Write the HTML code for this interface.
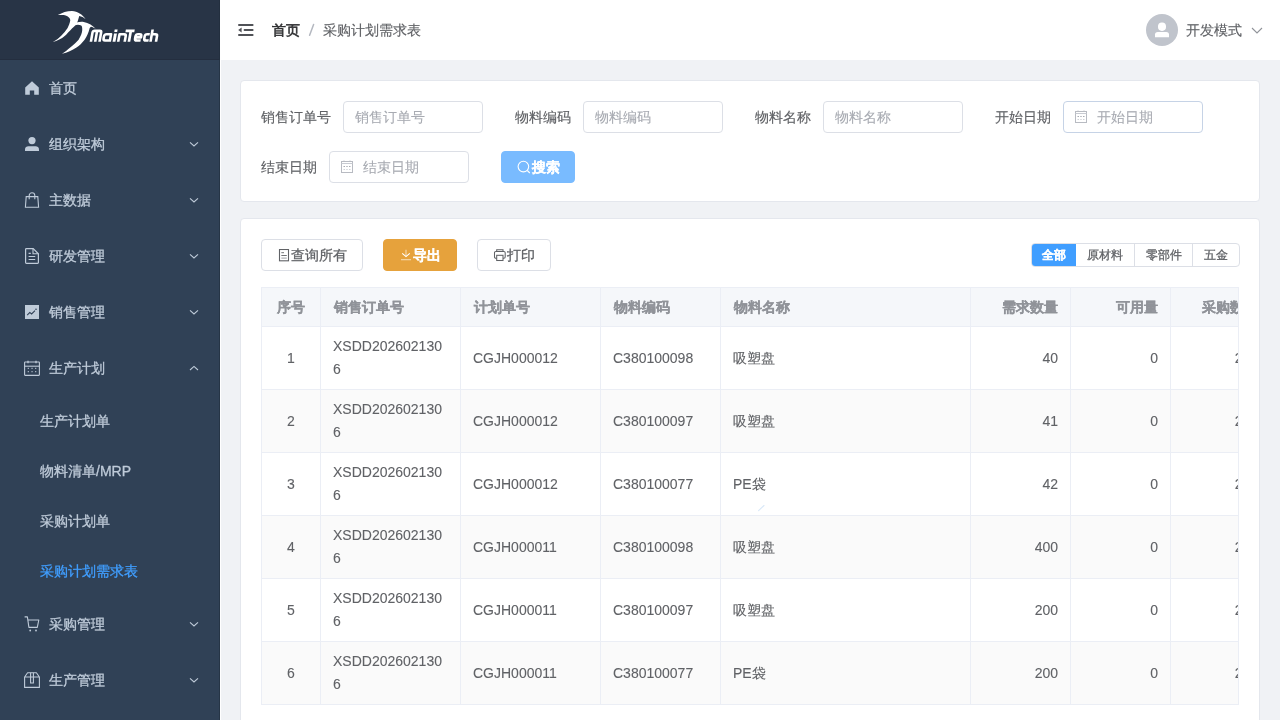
<!DOCTYPE html>
<html><head><meta charset="utf-8"><style>
*{box-sizing:border-box;margin:0;padding:0}
body{will-change:transform}
body *{-webkit-text-stroke:0.3px currentColor}
.th,[style*="font-weight:bold"]{-webkit-text-stroke:0.2px currentColor}
.td,.td *{-webkit-text-stroke:0.1px currentColor}
.lbl{-webkit-text-stroke:0.15px currentColor}
.inp{-webkit-text-stroke:0.1px currentColor}
#hdr span{-webkit-text-stroke:0.15px currentColor}
html,body{width:1280px;height:720px;overflow:hidden;font-family:"Liberation Sans",sans-serif;font-size:14px;background:#f0f2f5;color:#606266}
#side{position:absolute;left:0;top:0;width:220px;height:720px;background:#304156;z-index:5}
#logo{position:absolute;left:0;top:0;width:220px;height:60px;background:#283446}
.mi{position:absolute;left:0;width:220px;height:56px;color:#bfcbd9;font-size:14px}
.mi .t{position:absolute;left:49px;top:0;line-height:56px}
.mi svg.ic{position:absolute;left:24px;top:20px;width:16px;height:16px}
.mi svg.ar{position:absolute;left:188px;top:24px;width:12px;height:8px}
.si{position:absolute;left:0;width:220px;height:50px;line-height:50px;color:#bfcbd9}
.si .t{position:absolute;left:40px;top:0}
#hdr{position:absolute;left:220px;top:0;width:1060px;height:60px;background:#fff}
.card{position:absolute;background:#fff;border:1px solid #e4e7ed;border-radius:4px}
.lbl{position:absolute;color:#606266;line-height:32px;font-weight:500}
.inp{position:absolute;height:32px;border:1px solid #dcdfe6;border-radius:4px;background:#fff;color:#a8abb2;line-height:30px;padding-left:11px}
.btn{position:absolute;height:32px;border:1px solid #dcdfe6;border-radius:4px;background:#fff;color:#606266;line-height:30px;text-align:center}
.th{position:absolute;top:0;height:40px;line-height:40px;padding:0 12px 0 14px;color:#909399;font-weight:bold;white-space:nowrap;overflow:hidden}
.td{position:absolute;height:63px;padding:8px 12px 8px 13px;line-height:23px;color:#606266;display:flex;align-items:center;white-space:nowrap}
.td.c{justify-content:center}
</style></head><body>
<div id="side"><div id="logo"><svg style="position:absolute;left:0;top:0" width="220" height="60" viewBox="0 0 220 60">
<path d="M57.9,15.1 C62,12.6 67,11 72,11 C77.5,11.2 82.5,14.5 85.6,19.3 C83.6,17.6 81.5,16.4 79.2,16.1 C78.6,18.5 78,20.5 77.4,21.9 L76,24.4 C74,26.6 73,27.5 72.2,28.2 C69.3,31.2 67.2,33.6 65,35.8 C61.2,39 57.5,40.8 52.7,42 C56.5,40 59.2,38 61.2,35.8 C63.6,33.2 65.9,30.6 67.6,28 C68.6,25.6 69.8,23.5 70.25,20.5 C70.3,17.6 67.5,15.6 63.5,15 C61.5,14.8 59.5,14.9 57.9,15.1 Z" fill="#fff"/>
<path d="M76.2,22.6 C79,21.8 81.5,21.6 83.7,21.9 C88.5,22.6 93,25.5 96.1,29.2 C94.5,28 92.7,27.1 90.9,26.75 C90.3,27.3 90,27.6 89.7,28 C88.5,33 86.8,36.5 84.6,39.7 C82,43 79.5,45.5 76.5,47.5 C72,50.5 67.5,52.5 62,53.7 C65.2,52 67.8,49.6 70.2,47.5 C73.6,44.5 76.6,42 78.6,39.7 C80.8,36 82,33 82.2,30.5 C82.4,28.5 82.2,26.5 81.2,25.6 C79.5,24.6 76.5,24.6 74.4,25.6 Z" fill="#fff"/>
<g transform="translate(0,41.8) skewX(-10) translate(0,-41.8)" fill="none" stroke="#fff" stroke-width="2.6" stroke-linejoin="round">
<path d="M90.9,41.8 V32.6 Q90.9,30.9 92.6,30.9 H97.8 Q99.5,30.9 99.5,32.6 V41.8 M95.2,31.5 V41.8"/>
<path d="M109.7,41.8 V34.2 H105 Q103,34.2 103,36.4 V38.3 Q103,40.5 105,40.5 H109.7"/>
<path d="M114,41.8 V33.4 M114,29.6 V31.9" stroke-width="2.9"/>
<path d="M118.2,41.8 V34.2 H122.7 Q124.7,34.2 124.7,36.2 V41.8"/>
<path d="M123.7,30.9 H132.6 M128.9,30.9 V41.8" stroke-width="2.7"/>
<path d="M140.4,40.5 H136.6 Q134.5,40.5 134.5,38.4 V36.3 Q134.5,34.2 136.6,34.2 H138.3 Q140.2,34.2 140.2,36.1 V37.4 H135"/>
<path d="M148.4,34.2 H145.8 Q143.7,34.2 143.7,36.3 V38.4 Q143.7,40.5 145.8,40.5 H148.4"/>
<path d="M150.5,41.8 V29.6 M150.5,34.2 H154 Q156,34.2 156,36.2 V41.8"/>
</g>
</svg></div>
<div style="position:absolute;left:219px;top:0;width:1px;height:720px;background:#1f2b3a;opacity:.55;z-index:3"></div>
<div class="mi" style="top:60px"><svg class="ic" viewBox="0 0 16 16"><path d="M8 1.2 L14.8 7.6 V14.8 H10.2 V10.4 H5.8 V14.8 H1.2 V7.6 Z" fill="currentColor"/></svg><span class="t">首页</span></div>
<div class="mi" style="top:116px"><svg class="ic" viewBox="0 0 16 16"><circle cx="8" cy="4.6" r="3.6" fill="currentColor"/><path d="M1 15 V13.4 C1 11.4 2.6 10.2 4.4 10.2 H11.6 C13.4 10.2 15 11.4 15 13.4 V15 Z" fill="currentColor"/></svg><span class="t">组织架构</span><svg class="ar" viewBox="0 0 12 8"><path d="M2 2.4 L6 6 L10 2.4" fill="none" stroke="currentColor" stroke-width="1.1"/></svg></div>
<div class="mi" style="top:172px"><svg class="ic" viewBox="0 0 16 16"><path d="M1.4 15.3 L2.2 4.6 H13.8 L14.6 15.3 Z" fill="none" stroke="currentColor" stroke-width="1.1"/><path d="M5.2 7.2 V3.6 A2.8 2.8 0 0 1 10.8 3.6 V7.2" fill="none" stroke="currentColor" stroke-width="1.1"/></svg><span class="t">主数据</span><svg class="ar" viewBox="0 0 12 8"><path d="M2 2.4 L6 6 L10 2.4" fill="none" stroke="currentColor" stroke-width="1.1"/></svg></div>
<div class="mi" style="top:228px"><svg class="ic" viewBox="0 0 16 16"><path d="M1.6 1.4 Q1.6 0.6 2.4 0.6 H9.2 L14.4 5.8 V14.6 Q14.4 15.4 13.6 15.4 H2.4 Q1.6 15.4 1.6 14.6 Z" fill="none" stroke="currentColor" stroke-width="1.2"/><path d="M9 0.8 V5.8 H14.2" fill="none" stroke="currentColor" stroke-width="1.1"/><path d="M4.6 5.4 H6.8 M4.6 8.5 H11.2 M4.6 11.5 H11.2" stroke="currentColor" stroke-width="1.1"/></svg><span class="t">研发管理</span><svg class="ar" viewBox="0 0 12 8"><path d="M2 2.4 L6 6 L10 2.4" fill="none" stroke="currentColor" stroke-width="1.1"/></svg></div>
<div class="mi" style="top:284px"><svg class="ic" viewBox="0 0 16 16"><rect x="1" y="1" width="14" height="14" fill="currentColor"/><path d="M3.2 11.2 L5.8 8.4 L7.6 10 L11 6.6" fill="none" stroke="#304156" stroke-width="1.1"/><circle cx="12" cy="5.2" r="0.8" fill="#304156"/></svg><span class="t">销售管理</span><svg class="ar" viewBox="0 0 12 8"><path d="M2 2.4 L6 6 L10 2.4" fill="none" stroke="currentColor" stroke-width="1.1"/></svg></div>
<div class="mi" style="top:340px"><svg class="ic" viewBox="0 0 16 16"><rect x="0.6" y="2" width="14.8" height="13.4" rx="0.6" fill="none" stroke="currentColor" stroke-width="1.1"/><path d="M0.6 6.2 H15.4" stroke="currentColor" stroke-width="1.1"/><path d="M4 0.8 V3.2 M12 0.8 V3.2" stroke="currentColor" stroke-width="1.3"/><path d="M3.7 8.4 H5 M7.4 8.4 H8.7 M11 8.4 H12.3 M3.7 11.6 H5 M7.4 11.6 H8.7 M11 11.6 H12.3" stroke="currentColor" stroke-width="1.1" opacity=".8"/></svg><span class="t">生产计划</span><svg class="ar" viewBox="0 0 12 8"><path d="M2 6 L6 2.4 L10 6" fill="none" stroke="currentColor" stroke-width="1.1"/></svg></div>
<div class="si" style="top:396px"><span class="t">生产计划单</span></div>
<div class="si" style="top:446px"><span class="t">物料清单/MRP</span></div>
<div class="si" style="top:496px"><span class="t">采购计划单</span></div>
<div class="si" style="top:546px"><span class="t" style="color:#409eff">采购计划需求表</span></div>
<div class="mi" style="top:596px"><svg class="ic" viewBox="0 0 16 16"><path d="M0.6 0.9 H3.4 L4.9 11.4 H13.3 L14.8 4 H3.8" fill="none" stroke="currentColor" stroke-width="1.1" stroke-linejoin="round"/><circle cx="6.2" cy="14.5" r="0.9" fill="currentColor"/><circle cx="12" cy="14.5" r="0.9" fill="currentColor"/></svg><span class="t">采购管理</span><svg class="ar" viewBox="0 0 12 8"><path d="M2 2.4 L6 6 L10 2.4" fill="none" stroke="currentColor" stroke-width="1.1"/></svg></div>
<div class="mi" style="top:652px"><svg class="ic" viewBox="0 0 16 16"><path d="M0.6 5 L3.6 0.8 H12.4 L15.4 5 V15.4 H0.6 Z M0.6 5 H15.4" fill="none" stroke="currentColor" stroke-width="1.1" stroke-linejoin="round"/><path d="M6.6 0.8 V11 H9.4 V0.8" fill="none" stroke="currentColor" stroke-width="1.1"/></svg><span class="t">生产管理</span><svg class="ar" viewBox="0 0 12 8"><path d="M2 2.4 L6 6 L10 2.4" fill="none" stroke="currentColor" stroke-width="1.1"/></svg></div>
</div>
<div id="hdr">
<svg style="position:absolute;left:17px;top:22px" width="18" height="16" viewBox="0 0 18 16"><path d="M2 3 H15.6 M7.6 8 H15.6 M2 13 H15.6" stroke="#505257" stroke-width="2" stroke-linecap="round"/><path d="M1.2 8 L4.6 5.6 V10.4 Z" fill="#505257"/></svg>
<span style="position:absolute;left:52px;top:0;line-height:60px;color:#303133;-webkit-text-stroke:0.55px #303133">首页</span>
<svg style="position:absolute;left:88px;top:23px" width="8" height="14" viewBox="0 0 8 14"><path d="M1.6 12.3 L5.6 1.4" stroke="#b4b8c0" stroke-width="1.5" stroke-linecap="round"/></svg>
<span style="position:absolute;left:103px;top:0;line-height:60px;color:#606266">采购计划需求表</span>
<div style="position:absolute;left:926px;top:14px;width:32px;height:32px;border-radius:50%;background:#c0c4cc;overflow:hidden">
<svg width="32" height="32" viewBox="0 0 32 32"><rect x="12" y="8.5" width="8" height="8.4" rx="3.8" fill="#fff"/><path d="M9 23.2 V20.6 Q9 17.9 11.8 17.9 H20.2 Q23 17.9 23 20.6 V23.2 Z" fill="#fff"/></svg></div>
<span style="position:absolute;left:966px;top:0;line-height:60px;color:#606266">开发模式</span>
<svg style="position:absolute;left:1031px;top:26px" width="12" height="10" viewBox="0 0 12 10"><path d="M1 2 L6 7 L11 2" fill="none" stroke="#909399" stroke-width="1.1"/></svg>
</div>
<div style="position:absolute;left:0;top:59px;width:219px;height:1px;background:#222c3b;opacity:.6;z-index:6"></div>
<div style="position:absolute;left:220px;top:60px;width:1px;height:660px;background:#fff"></div>
<div class="card" style="left:240px;top:80px;width:1020px;height:122px"></div>
<span class="lbl" style="left:261px;top:101px">销售订单号</span>
<div class="inp" style="left:343px;top:101px;width:140px">销售订单号</div>
<span class="lbl" style="left:515px;top:101px">物料编码</span>
<div class="inp" style="left:583px;top:101px;width:140px">物料编码</div>
<span class="lbl" style="left:755px;top:101px">物料名称</span>
<div class="inp" style="left:823px;top:101px;width:140px">物料名称</div>
<span class="lbl" style="left:995px;top:101px">开始日期</span>
<div class="inp" style="left:1063px;top:101px;width:140px;padding-left:33px;border-color:#c6d3e6"><svg style="position:absolute;left:11px;top:8px" width="13" height="14" viewBox="0 0 13 14"><rect x="0.5" y="1.5" width="11" height="11" fill="none" stroke="#b8bbc2" stroke-width="1"/><path d="M0.5 3.5 H11.5" stroke="#c8cbd2" stroke-width="1"/><path d="M3 0.5 V2 M9 0.5 V2" stroke="#b8bbc2" stroke-width="1"/><path d="M2.5 6.5 H4 M5.3 6.5 H6.7 M8 6.5 H9.5" stroke="#a8abb2" stroke-width="1"/><path d="M2.5 9.5 H4 M5.3 9.5 H6.7 M8 9.5 H9.5" stroke="#d0d3d8" stroke-width="1"/></svg>开始日期</div>
<span class="lbl" style="left:261px;top:151px">结束日期</span>
<div class="inp" style="left:329px;top:151px;width:140px;padding-left:33px"><svg style="position:absolute;left:11px;top:8px" width="13" height="14" viewBox="0 0 13 14"><rect x="0.5" y="1.5" width="11" height="11" fill="none" stroke="#b8bbc2" stroke-width="1"/><path d="M0.5 3.5 H11.5" stroke="#c8cbd2" stroke-width="1"/><path d="M3 0.5 V2 M9 0.5 V2" stroke="#b8bbc2" stroke-width="1"/><path d="M2.5 6.5 H4 M5.3 6.5 H6.7 M8 6.5 H9.5" stroke="#a8abb2" stroke-width="1"/><path d="M2.5 9.5 H4 M5.3 9.5 H6.7 M8 9.5 H9.5" stroke="#d0d3d8" stroke-width="1"/></svg>结束日期</div>
<div class="btn" style="left:501px;top:151px;width:74px;background:#79bbff;border-color:#79bbff;color:#fff;font-weight:bold;padding-left:16px">
<svg style="position:absolute;left:15px;top:8px" width="14" height="14" viewBox="0 0 14 14"><circle cx="6.4" cy="6.6" r="5.3" fill="none" stroke="#fff" stroke-width="1.1"/><path d="M10.3 10.5 L12.8 13" stroke="#fff" stroke-width="1.1"/></svg>搜索</div>

<div class="card" style="left:240px;top:218px;width:1020px;height:540px"></div>
<div class="btn" style="left:261px;top:239px;width:102px;padding-left:14px">
<svg style="position:absolute;left:16px;top:9px" width="12" height="13" viewBox="0 0 12 13"><rect x="1.5" y="0.5" width="9" height="11.3" fill="none" stroke="#606266" stroke-width="1.1"/><path d="M3.3 3.7 H6 M3.3 6.5 H8.8" stroke="#606266" stroke-width="0.9"/><path d="M3.3 9.1 H8.8" stroke="#9a9ca2" stroke-width="1"/></svg>查询所有</div>
<div class="btn" style="left:383px;top:239px;width:74px;background:#e6a23c;border-color:#e6a23c;color:#fff;font-weight:bold;padding-left:14px">
<svg style="position:absolute;left:16px;top:9px" width="12" height="13" viewBox="0 0 12 13"><path d="M6 0.8 V7.2" stroke="#fff" stroke-opacity=".6" stroke-width="1.1"/><path d="M2.2 4.3 L6 7.6 L9.8 4.3" fill="none" stroke="#fff" stroke-width="1.1"/><path d="M1 10.7 H11" stroke="#fff" stroke-opacity=".6" stroke-width="1.1"/></svg>导出</div>
<div class="btn" style="left:477px;top:239px;width:74px;padding-left:14px">
<svg style="position:absolute;left:15px;top:9px" width="14" height="13" viewBox="0 0 14 13"><rect x="1.5" y="2.5" width="10.7" height="6.8" rx="1.3" fill="none" stroke="#606266" stroke-width="1.05"/><path d="M3.7 2.4 V0.8 H10 V2.4" fill="none" stroke="#606266" stroke-width="1.05"/><rect x="3.7" y="6.3" width="6.3" height="5.2" fill="#fff" stroke="#606266" stroke-width="1.05"/></svg>打印</div>
<div style="position:absolute;left:1031px;top:243px;width:209px;height:24px;border:1px solid #dcdfe6;border-radius:4px;font-size:12px;line-height:22px;color:#606266;background:#fff;overflow:hidden">
<span style="position:absolute;left:-1px;top:-1px;width:45px;height:24px;line-height:24px;background:#409eff;color:#fff;text-align:center;font-weight:bold;border-radius:4px 0 0 4px">全部</span>
<span style="position:absolute;left:44px;top:0;width:59px;text-align:center;border-right:1px solid #dcdfe6;font-weight:500">原材料</span>
<span style="position:absolute;left:103px;top:0;width:58px;text-align:center;border-right:1px solid #dcdfe6;font-weight:500">零部件</span>
<span style="position:absolute;left:161px;top:0;width:46px;text-align:center;font-weight:500">五金</span>
</div>

<div id="tw" style="position:absolute;left:261px;top:287px;width:978px;height:420px;overflow:hidden">
<div style="position:absolute;left:0;top:0;width:1009px;height:40px;background:#f5f7fa"></div>
<div class="th" style="left:0px;width:60px;text-align:center;padding:0 12px">序号</div>
<div class="th" style="left:59px;width:140px;text-align:left">销售订单号</div>
<div class="th" style="left:199px;width:140px;text-align:left">计划单号</div>
<div class="th" style="left:339px;width:120px;text-align:left">物料编码</div>
<div class="th" style="left:459px;width:250px;text-align:left">物料名称</div>
<div class="th" style="left:709px;width:100px;text-align:right">需求数量</div>
<div class="th" style="left:809px;width:100px;text-align:right">可用量</div>
<div class="th" style="left:909px;width:100px;text-align:right">采购数量</div>
<div style="position:absolute;left:0;top:40px;width:1009px;height:63px;background:#fff"></div>
<div class="td" style="left:0px;top:40px;width:60px;text-align:center;justify-content:center;padding:8px 12px">1</div>
<div class="td" style="left:59px;top:40px;width:140px;text-align:left;justify-content:flex-start"><span style="position:relative;top:-1px">XSDD202602130<br>6</span></div>
<div class="td" style="left:199px;top:40px;width:140px;text-align:left;justify-content:flex-start">CGJH000012</div>
<div class="td" style="left:339px;top:40px;width:120px;text-align:left;justify-content:flex-start">C380100098</div>
<div class="td" style="left:459px;top:40px;width:250px;text-align:left;justify-content:flex-start">吸塑盘</div>
<div class="td" style="left:709px;top:40px;width:100px;text-align:right;justify-content:flex-end">40</div>
<div class="td" style="left:809px;top:40px;width:100px;text-align:right;justify-content:flex-end">0</div>
<div class="td" style="left:909px;top:40px;width:100px;text-align:right;justify-content:flex-end">200</div>
<div style="position:absolute;left:0;top:103px;width:1009px;height:63px;background:#fafafa"></div>
<div class="td" style="left:0px;top:103px;width:60px;text-align:center;justify-content:center;padding:8px 12px">2</div>
<div class="td" style="left:59px;top:103px;width:140px;text-align:left;justify-content:flex-start"><span style="position:relative;top:-1px">XSDD202602130<br>6</span></div>
<div class="td" style="left:199px;top:103px;width:140px;text-align:left;justify-content:flex-start">CGJH000012</div>
<div class="td" style="left:339px;top:103px;width:120px;text-align:left;justify-content:flex-start">C380100097</div>
<div class="td" style="left:459px;top:103px;width:250px;text-align:left;justify-content:flex-start">吸塑盘</div>
<div class="td" style="left:709px;top:103px;width:100px;text-align:right;justify-content:flex-end">41</div>
<div class="td" style="left:809px;top:103px;width:100px;text-align:right;justify-content:flex-end">0</div>
<div class="td" style="left:909px;top:103px;width:100px;text-align:right;justify-content:flex-end">200</div>
<div style="position:absolute;left:0;top:166px;width:1009px;height:63px;background:#fff"></div>
<div class="td" style="left:0px;top:166px;width:60px;text-align:center;justify-content:center;padding:8px 12px">3</div>
<div class="td" style="left:59px;top:166px;width:140px;text-align:left;justify-content:flex-start"><span style="position:relative;top:-1px">XSDD202602130<br>6</span></div>
<div class="td" style="left:199px;top:166px;width:140px;text-align:left;justify-content:flex-start">CGJH000012</div>
<div class="td" style="left:339px;top:166px;width:120px;text-align:left;justify-content:flex-start">C380100077</div>
<div class="td" style="left:459px;top:166px;width:250px;text-align:left;justify-content:flex-start">PE袋</div>
<div class="td" style="left:709px;top:166px;width:100px;text-align:right;justify-content:flex-end">42</div>
<div class="td" style="left:809px;top:166px;width:100px;text-align:right;justify-content:flex-end">0</div>
<div class="td" style="left:909px;top:166px;width:100px;text-align:right;justify-content:flex-end">200</div>
<div style="position:absolute;left:0;top:229px;width:1009px;height:63px;background:#fafafa"></div>
<div class="td" style="left:0px;top:229px;width:60px;text-align:center;justify-content:center;padding:8px 12px">4</div>
<div class="td" style="left:59px;top:229px;width:140px;text-align:left;justify-content:flex-start"><span style="position:relative;top:-1px">XSDD202602130<br>6</span></div>
<div class="td" style="left:199px;top:229px;width:140px;text-align:left;justify-content:flex-start">CGJH000011</div>
<div class="td" style="left:339px;top:229px;width:120px;text-align:left;justify-content:flex-start">C380100098</div>
<div class="td" style="left:459px;top:229px;width:250px;text-align:left;justify-content:flex-start">吸塑盘</div>
<div class="td" style="left:709px;top:229px;width:100px;text-align:right;justify-content:flex-end">400</div>
<div class="td" style="left:809px;top:229px;width:100px;text-align:right;justify-content:flex-end">0</div>
<div class="td" style="left:909px;top:229px;width:100px;text-align:right;justify-content:flex-end">200</div>
<div style="position:absolute;left:0;top:292px;width:1009px;height:63px;background:#fff"></div>
<div class="td" style="left:0px;top:292px;width:60px;text-align:center;justify-content:center;padding:8px 12px">5</div>
<div class="td" style="left:59px;top:292px;width:140px;text-align:left;justify-content:flex-start"><span style="position:relative;top:-1px">XSDD202602130<br>6</span></div>
<div class="td" style="left:199px;top:292px;width:140px;text-align:left;justify-content:flex-start">CGJH000011</div>
<div class="td" style="left:339px;top:292px;width:120px;text-align:left;justify-content:flex-start">C380100097</div>
<div class="td" style="left:459px;top:292px;width:250px;text-align:left;justify-content:flex-start">吸塑盘</div>
<div class="td" style="left:709px;top:292px;width:100px;text-align:right;justify-content:flex-end">200</div>
<div class="td" style="left:809px;top:292px;width:100px;text-align:right;justify-content:flex-end">0</div>
<div class="td" style="left:909px;top:292px;width:100px;text-align:right;justify-content:flex-end">200</div>
<div style="position:absolute;left:0;top:355px;width:1009px;height:63px;background:#fafafa"></div>
<div class="td" style="left:0px;top:355px;width:60px;text-align:center;justify-content:center;padding:8px 12px">6</div>
<div class="td" style="left:59px;top:355px;width:140px;text-align:left;justify-content:flex-start"><span style="position:relative;top:-1px">XSDD202602130<br>6</span></div>
<div class="td" style="left:199px;top:355px;width:140px;text-align:left;justify-content:flex-start">CGJH000011</div>
<div class="td" style="left:339px;top:355px;width:120px;text-align:left;justify-content:flex-start">C380100077</div>
<div class="td" style="left:459px;top:355px;width:250px;text-align:left;justify-content:flex-start">PE袋</div>
<div class="td" style="left:709px;top:355px;width:100px;text-align:right;justify-content:flex-end">200</div>
<div class="td" style="left:809px;top:355px;width:100px;text-align:right;justify-content:flex-end">0</div>
<div class="td" style="left:909px;top:355px;width:100px;text-align:right;justify-content:flex-end">200</div>
<div style="position:absolute;left:0px;top:0;width:1px;height:418px;background:#ebeef5"></div>
<div style="position:absolute;left:59px;top:0;width:1px;height:418px;background:#ebeef5"></div>
<div style="position:absolute;left:199px;top:0;width:1px;height:418px;background:#ebeef5"></div>
<div style="position:absolute;left:339px;top:0;width:1px;height:418px;background:#ebeef5"></div>
<div style="position:absolute;left:459px;top:0;width:1px;height:418px;background:#ebeef5"></div>
<div style="position:absolute;left:709px;top:0;width:1px;height:418px;background:#ebeef5"></div>
<div style="position:absolute;left:809px;top:0;width:1px;height:418px;background:#ebeef5"></div>
<div style="position:absolute;left:909px;top:0;width:1px;height:418px;background:#ebeef5"></div>
<div style="position:absolute;left:0;top:39px;width:1009px;height:1px;background:#ebeef5"></div>
<div style="position:absolute;left:0;top:102px;width:1009px;height:1px;background:#ebeef5"></div>
<div style="position:absolute;left:0;top:165px;width:1009px;height:1px;background:#ebeef5"></div>
<div style="position:absolute;left:0;top:228px;width:1009px;height:1px;background:#ebeef5"></div>
<div style="position:absolute;left:0;top:291px;width:1009px;height:1px;background:#ebeef5"></div>
<div style="position:absolute;left:0;top:354px;width:1009px;height:1px;background:#ebeef5"></div>
<div style="position:absolute;left:0;top:417px;width:1009px;height:1px;background:#ebeef5"></div>
<div style="position:absolute;left:0;top:0;width:1009px;height:1px;background:#ebeef5"></div>
<div style="position:absolute;left:977px;top:0;width:1px;height:418px;background:#ebeef5"></div>
</div>

<svg style="position:absolute;left:755px;top:502px" width="12" height="12" viewBox="0 0 12 12"><path d="M3.6 8.6 L9 3.5" stroke="#d8e8f8" stroke-width="1.1" stroke-linecap="round"/></svg>
</body></html>
